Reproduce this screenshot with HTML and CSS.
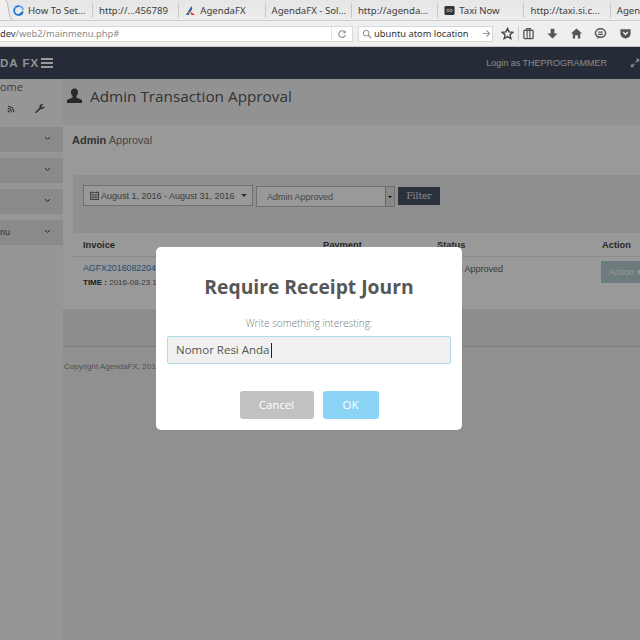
FILE: index.html
```html
<!DOCTYPE html>
<html lang="en">
<head>
<meta charset="utf-8">
<title>Admin Transaction Approval</title>
<link rel="stylesheet" href="styles.css">
</head>
<body>
<div class="browser">
  <div class="tabs">
    <svg class="tab-curve" viewBox="0 0 13 21"><path d="M0 0H5C7 0 7.500 3 8.500 9 9.500 16 10.500 19 13 20V21H0z" fill="#efefef"/><path d="M5 0C7 0 7.500 3 8.500 9 9.500 16 10.500 19 13 20" fill="none" stroke="#b9b9b9"/></svg>
    <div class="tab tab-active">
      <svg class="fav" viewBox="0 0 12 12"><path d="M7 1.300a4.800 4.800 0 1 0 3.800 5.700" fill="none" stroke="#1f6fd6" stroke-width="2"/><path d="M6.500 1.200a4.600 4.600 0 0 1 4.300 4.300" fill="none" stroke="#5aa7ee" stroke-width="2"/><path d="M1 1.500l3 1-2 2z" fill="#5aa7ee"/><path d="M6 10.500l3.500-3.500.8 3.500z" fill="#1f6fd6"/></svg>
      <span>How To Set…</span>
    </div>
    <div class="tab"><span>http://…456789</span></div>
    <div class="tab">
      <svg class="fav" viewBox="0 0 12 12"><path d="M1 11 7 1l1 3-4 7z" fill="#2f5fb0"/><path d="M6 7l5 4H7z" fill="#e8392c"/><path d="M3 8l3-1 1 1-3 1z" fill="#f2a31b"/></svg>
      <span>AgendaFX</span>
    </div>
    <div class="tab"><span>AgendaFX - Sol…</span></div>
    <div class="tab"><span>http://agenda…</span></div>
    <div class="tab">
      <svg class="fav" viewBox="0 0 12 12"><rect x=".5" y="1" width="11" height="10" rx="1.500" fill="#333"/><circle cx="4.400" cy="6" r="1.400" fill="none" stroke="#aaa"/><circle cx="7.600" cy="6" r="1.400" fill="none" stroke="#aaa"/></svg>
      <span>Taxi Now</span>
    </div>
    <div class="tab"><span>http://taxi.si.c…</span></div>
    <div class="tab tab-last"><span>Agen</span></div>
  </div>
  <div class="toolbar">
    <div class="urlbar">
      <span class="url"><b>dev</b>/web2/mainmenu.php#</span>
      <span class="url-end">
        <svg class="reload" viewBox="0 0 12 12"><path d="M9.500 4A4 4 0 1 0 10 7" fill="none" stroke="#8a949c" stroke-width="1.400"/><path d="M10.500 1.500v3.600H7z" fill="#8a949c"/></svg>
      </span>
    </div>
    <div class="searchbar">
      <svg class="glass" viewBox="0 0 12 12"><circle cx="5" cy="5" r="3.400" fill="none" stroke="#8a8a8a" stroke-width="1.200"/><path d="M7.500 7.500 11 11" stroke="#8a8a8a" stroke-width="1.400"/></svg>
      <span class="query">ubuntu atom location</span>
      <svg class="go" viewBox="0 0 10 10"><path d="M1 5h7M5 1.500 8.500 5 5 8.500" fill="none" stroke="#8c99a6" stroke-width="1.300"/></svg>
    </div>
    <div class="tools">
      <svg class="tool" viewBox="0 0 14 14"><path d="M7 1.500 8.700 5.300l4 .4-3 2.700.9 4L7 10.300 3.400 12.400l.9-4-3-2.700 4-.4z" fill="none" stroke="#444" stroke-width="1.500"/></svg>
      <i class="tool-sep"></i>
      <svg class="tool" viewBox="0 0 14 14"><rect x="2" y="3.500" width="10" height="9" rx="1" fill="none" stroke="#555" stroke-width="1.400"/><path d="M5 3.500V1.800h4v1.700M5.500 4v8M8.500 4v8" fill="none" stroke="#555" stroke-width="1.200"/></svg>
      <svg class="tool" viewBox="0 0 14 14"><path d="M5 2h4v5h3.500L7 12.500 1.500 7H5z" fill="#555"/></svg>
      <svg class="tool" viewBox="0 0 14 14"><path d="M7 1.500 13 7h-2v5.500H8.500V9h-3v3.500H3V7H1z" fill="#555"/></svg>
      <svg class="tool" viewBox="0 0 14 14"><ellipse cx="7" cy="6.500" rx="5.500" ry="4.600" fill="none" stroke="#555" stroke-width="1.600"/><path d="M4.500 5.500h5M4.500 8h5" stroke="#555" stroke-width="1.300"/><path d="M4 10.500 3.500 13 6.500 11z" fill="#555"/></svg>
      <svg class="tool" viewBox="0 0 14 14"><path d="M1.500 2.500h11v4.500a5.500 5.500 0 0 1-11 0z" fill="#555"/><path d="M4.500 5.500 7 8l2.500-2.500" fill="none" stroke="#eee" stroke-width="1.500"/></svg>
    </div>
  </div>
  <div class="page">
    <header class="navbar">
      <span class="brand">DA FX</span>
      <span class="burger"><i></i><i></i><i></i></span>
      <span class="login">Login as THEPROGRAMMER</span>
      <svg class="expand" viewBox="0 0 12 12"><path d="M7 1h4v4L9.600 3.600 7.500 5.700 6.300 4.500 8.400 2.400zM1 7l1.400 1.400 2.100-2.100 1.200 1.200-2.100 2.100L5 11H1z" fill="#e4e4e4"/></svg>
    </header>
    <div class="main">
      <aside class="sidebar">
        <div class="home">ome</div>
        <div class="side-icons">
          <svg class="rss" viewBox="0 0 10 10"><circle cx="2" cy="8" r="1.300" fill="#555"/><path d="M1 4.500A4.500 4.500 0 0 1 5.500 9M1 1.500A7.500 7.500 0 0 1 8.500 9" fill="none" stroke="#555" stroke-width="1.300"/></svg>
          <svg class="wrench" viewBox="0 0 12 12"><path d="M1 10 6 5.200A3 3 0 0 1 10.200 1.400L8.300 3.300l.5 1.300 1.300.4L11.400 3A3 3 0 0 1 7.300 6.600L2.300 11.300z" fill="#555"/></svg>
        </div>
        <div class="side-item"><span></span><svg class="chev" viewBox="0 0 8 6"><path d="M1 1.500 4 4l3-2.500" fill="none" stroke="#444" stroke-width="1.200"/></svg></div>
        <div class="side-item"><span></span><svg class="chev" viewBox="0 0 8 6"><path d="M1 1.500 4 4l3-2.500" fill="none" stroke="#444" stroke-width="1.200"/></svg></div>
        <div class="side-item"><span></span><svg class="chev" viewBox="0 0 8 6"><path d="M1 1.500 4 4l3-2.500" fill="none" stroke="#444" stroke-width="1.200"/></svg></div>
        <div class="side-item"><span>nu</span><svg class="chev" viewBox="0 0 8 6"><path d="M1 1.500 4 4l3-2.500" fill="none" stroke="#444" stroke-width="1.200"/></svg></div>
      </aside>
      <main class="content">
        <div class="title-band">
          <svg class="user" viewBox="0 0 15 15"><path d="M7.500 0.500c2.300 0 3.500 1.700 3.500 3.800 0 1.600-.7 3-1.600 3.800v1.400L15 12v3H0v-3l5.600-2.500V8.100C4.700 7.300 4 5.900 4 4.300 4 2.200 5.200.5 7.500.5z" fill="#444"/></svg>
          <h1>Admin Transaction Approval</h1>
        </div>
        <section class="panel">
          <h2><b>Admin</b> Approval</h2>
          <div class="filters">
            <div class="date-btn">
              <svg class="cal" viewBox="0 0 10 10"><rect x=".5" y="1.500" width="9" height="8" fill="none" stroke="#666"/><path d="M.5 4h9M3.500 4v5.500M6.500 4v5.500M.5 6.700h9M2.500.5v2M7.500.5v2" stroke="#666" stroke-width=".8" fill="none"/></svg>
              <span>August 1, 2016 - August 31, 2016</span><i class="caret"></i>
            </div>
            <div class="select"><span>Admin Approved</span><span class="select-arrow"><i></i></span></div>
            <div class="filter-btn">Filter</div>
          </div>
          <div class="table-row thead">
            <span>Invoice</span><span>Payment</span><span>Status</span><span>Action</span>
          </div>
          <div class="table-row tbody">
            <div class="cell-invoice">
              <a href="#">AGFX201608220401</a>
              <div class="time"><b>TIME :</b> 2016-08-23 12:04:11</div>
            </div>
            <span></span>
            <span class="status">Admin Approved</span>
            <span class="action">Action ▾</span>
          </div>
        </section>
        <div class="band"></div>
        <footer class="copy">Copyright AgendaFX, 2016</footer>
      </main>
    </div>
    <div class="overlay">
      <div class="modal">
        <h3>Require Receipt Journ</h3>
        <p>Write something interesting:</p>
        <div class="field">Nomor Resi Anda<i class="cursor"></i></div>
        <div class="actions">
          <span class="btn btn-cancel">Cancel</span>
          <span class="btn btn-ok">OK</span>
        </div>
      </div>
    </div>
  </div>
</div>
</body>
</html>
```
FILE: styles.css
```css
* { box-sizing: border-box; }
html, body { margin: 0; padding: 0; }
body { width: 640px; height: 640px; overflow: hidden; font-family: "Liberation Sans", Arial, sans-serif; }
.browser { display: flex; flex-direction: column; height: 640px; background: #eee; }

.tabs { display: flex; height: 21px; background: linear-gradient(#e6e6e6, #ececec); border-bottom: 1px solid #cfcfcf; overflow: hidden; font: 9.600px "Noto Sans", sans-serif; color: #3c3c3c; flex: none; }
.tab-curve { width: 13px; height: 21px; flex: none; }
.tab { flex: 0 0 86.300px; height: 15px; margin-top: 3px; padding-left: 6px; display: flex; align-items: center; gap: 4px; border-left: 1px solid #c8c8c8; white-space: nowrap; }
.tab-active { flex-basis: 79px; padding-left: 0; border-left: 0; }
.tab-last { flex: 0 0 30px; overflow: hidden; }
.fav { width: 11px; height: 11px; flex: none; }

.toolbar { display: flex; align-items: center; height: 26px; background: #efefef; border-bottom: 1px solid #c6c6c6; flex: none; }
.urlbar { width: 353px; height: 16px; background: #fff; border: 1px solid #d8d8d8; border-left: 0; display: flex; align-items: center; justify-content: space-between; font: 9.300px "Noto Sans", sans-serif; color: #8a8a8a; }
.url b { font-weight: 400; color: #333; }
.url-end { display: flex; align-items: center; justify-content: center; width: 21px; height: 100%; border-left: 1px solid #e2e2e2; }
.reload { width: 10px; height: 10px; }
.searchbar { width: 135px; height: 16px; margin-left: 5px; background: #fff; border: 1px solid #d8d8d8; display: flex; align-items: center; padding: 0 1px 0 3px; gap: 2px; font: 9.300px "Noto Sans", sans-serif; color: #333; }
.glass { width: 10px; height: 10px; flex: none; }
.query { flex: 1; white-space: nowrap; }
.go { width: 9px; height: 9px; flex: none; }
.tools { display: flex; align-items: center; gap: 11.300px; margin-left: 8px; }
.tool { width: 13px; height: 13px; flex: none; }
.tool-sep { width: 1px; height: 14px; background: #ccc; margin: 0 -9px 0 -7px; }

.page { position: relative; flex: 1; overflow: hidden; display: flex; flex-direction: column; }
.navbar { height: 32px; flex: none; background: #3f495c; display: flex; align-items: center; color: #f4f4f4; }
.brand { font-size: 11.500px; font-weight: 700; letter-spacing: 1px; white-space: nowrap; }
.burger { display: flex; flex-direction: column; gap: 2px; width: 12px; margin-left: 2px; }
.burger i { display: block; height: 2px; background: #fff; }
.login { margin-left: auto; font-size: 9px; color: #e0e0e0; }
.expand { width: 10px; height: 10px; margin: 0 0 0 23px; }

.main { flex: 1; display: flex; background: #f6f6f6; min-height: 0; }
.sidebar { width: 63px; flex: none; background: #fbfbfb; }
.home { height: 20px; font: 11px "Open Sans", sans-serif; color: #666; }
.side-icons { height: 28px; padding: 4px 0 0 7px; display: flex; gap: 19px; }
.rss { width: 8px; height: 8px; margin-top: 2px; }
.wrench { width: 11px; height: 11px; }
.side-item { height: 25px; margin-bottom: 6px; padding: 0 12px 2px 0; background: #e6e6e6; display: flex; align-items: center; justify-content: space-between; font-size: 9px; color: #555; }
.chev { width: 7px; height: 5px; }

.content { flex: 1; min-width: 0; overflow: hidden; background: #f0f0f0; }
.title-band { height: 46px; background: #f3f3f3; display: flex; align-items: center; padding: 0 0 13px 4px; gap: 8px; }
.user { width: 15px; height: 15px; }
h1 { margin: 0; font: 400 15.300px "Open Sans", sans-serif; color: #555; white-space: nowrap; }
.panel { height: 184px; background: #ffffff; padding: 9px 0 0 9px; }
h2 { margin: 0; height: 41px; font: 400 11px "Liberation Sans", sans-serif; color: #777; }
h2 b { color: #555; }
.filters { height: 58px; margin-left: 1px; background: #efefef; display: flex; align-items: flex-start; padding: 10px 0 0 10px; }
.date-btn { width: 170px; height: 21px; background: #fff; border: 1px solid #bbb; display: flex; align-items: center; padding-left: 6px; gap: 2px; font-size: 9px; color: #666; white-space: nowrap; }
.cal { width: 9px; height: 9px; flex: none; }
.caret { width: 0; height: 0; border: 3px solid transparent; border-top-color: #555; border-bottom: 0; margin-left: 4px; }
.select { width: 139px; height: 21px; margin: 1px 0 0 3px; background: #fff; border: 1px solid #bbb; display: flex; align-items: center; justify-content: space-between; padding-left: 10px; font-size: 9px; color: #777; }
.select-arrow { width: 9px; height: 100%; background: #e4e4e4; border-left: 1px solid #aaa; display: flex; align-items: center; justify-content: center; }
.select-arrow i { border: 2px solid transparent; border-top-color: #111; border-bottom: 0; }
.filter-btn { width: 42px; height: 18px; margin: 2px 0 0 3px; background: #4a5368; color: #e4e4e4; font: 9px "DejaVu Serif", serif; display: flex; align-items: center; justify-content: center; }
.table-row { display: grid; grid-template-columns: 240px 114px 165px 60px; padding-left: 11px; }
.thead { height: 24px; padding-top: 7px; border-bottom: 1px solid #e8e8e8; font-size: 9.300px; font-weight: 700; color: #444; }
.tbody { padding-top: 5px; font-size: 9px; color: #666; }
.cell-invoice a { display: block; color: #3c7fbd; font-size: 8.800px; line-height: 12px; text-decoration: none; white-space: nowrap; }
.time { margin-top: 4px; font-size: 8px; white-space: nowrap; }
.time b { color: #333; }
.status { margin-top: 2px; white-space: nowrap; }
.action { height: 22px; margin: -1px 0 0 -1px; background: #b5cdcd; color: #fff; display: flex; align-items: center; padding-left: 8px; white-space: nowrap; font-size: 9px; }
.band { height: 38px; background: #ebebeb; border-bottom: 1px solid #cfcfcf; }
.copy { padding: 15px 0 0 1px; font-size: 8px; color: #888; white-space: nowrap; }

.overlay { position: absolute; inset: 0; background: rgba(0, 0, 0, .4); padding: 200px 0 0 156px; }
.modal { width: 306px; height: 183px; background: #fff; border-radius: 5px; padding: 26px 11px 0; display: flex; flex-direction: column; align-items: center; font-family: "Open Sans", sans-serif; }
h3 { margin: 0; font-size: 19.300px; line-height: 27px; font-weight: 700; color: #575757; white-space: nowrap; }
.modal p { margin: 16px 0 0; font-size: 10px; line-height: 14px; font-weight: 300; color: #797979; }
.field { align-self: stretch; height: 28px; margin-top: 6px; padding: 0 0 2px 8px; background: #f0f0f0; border: 1px solid #b4dbed; border-radius: 2px; display: flex; align-items: center; font-size: 11.500px; color: #555; }
.cursor { width: 1px; height: 15px; background: #222; margin: 2px 0 0 1px; }
.actions { display: flex; gap: 9px; margin-top: 27px; }
.btn { height: 28px; padding-bottom: 1px; border-radius: 3px; display: flex; align-items: center; justify-content: center; color: #fff; font-size: 11.500px; }
.btn-cancel { width: 74px; background: #c1c1c1; }
.btn-ok { width: 56px; background: #8cd4f5; }
```
